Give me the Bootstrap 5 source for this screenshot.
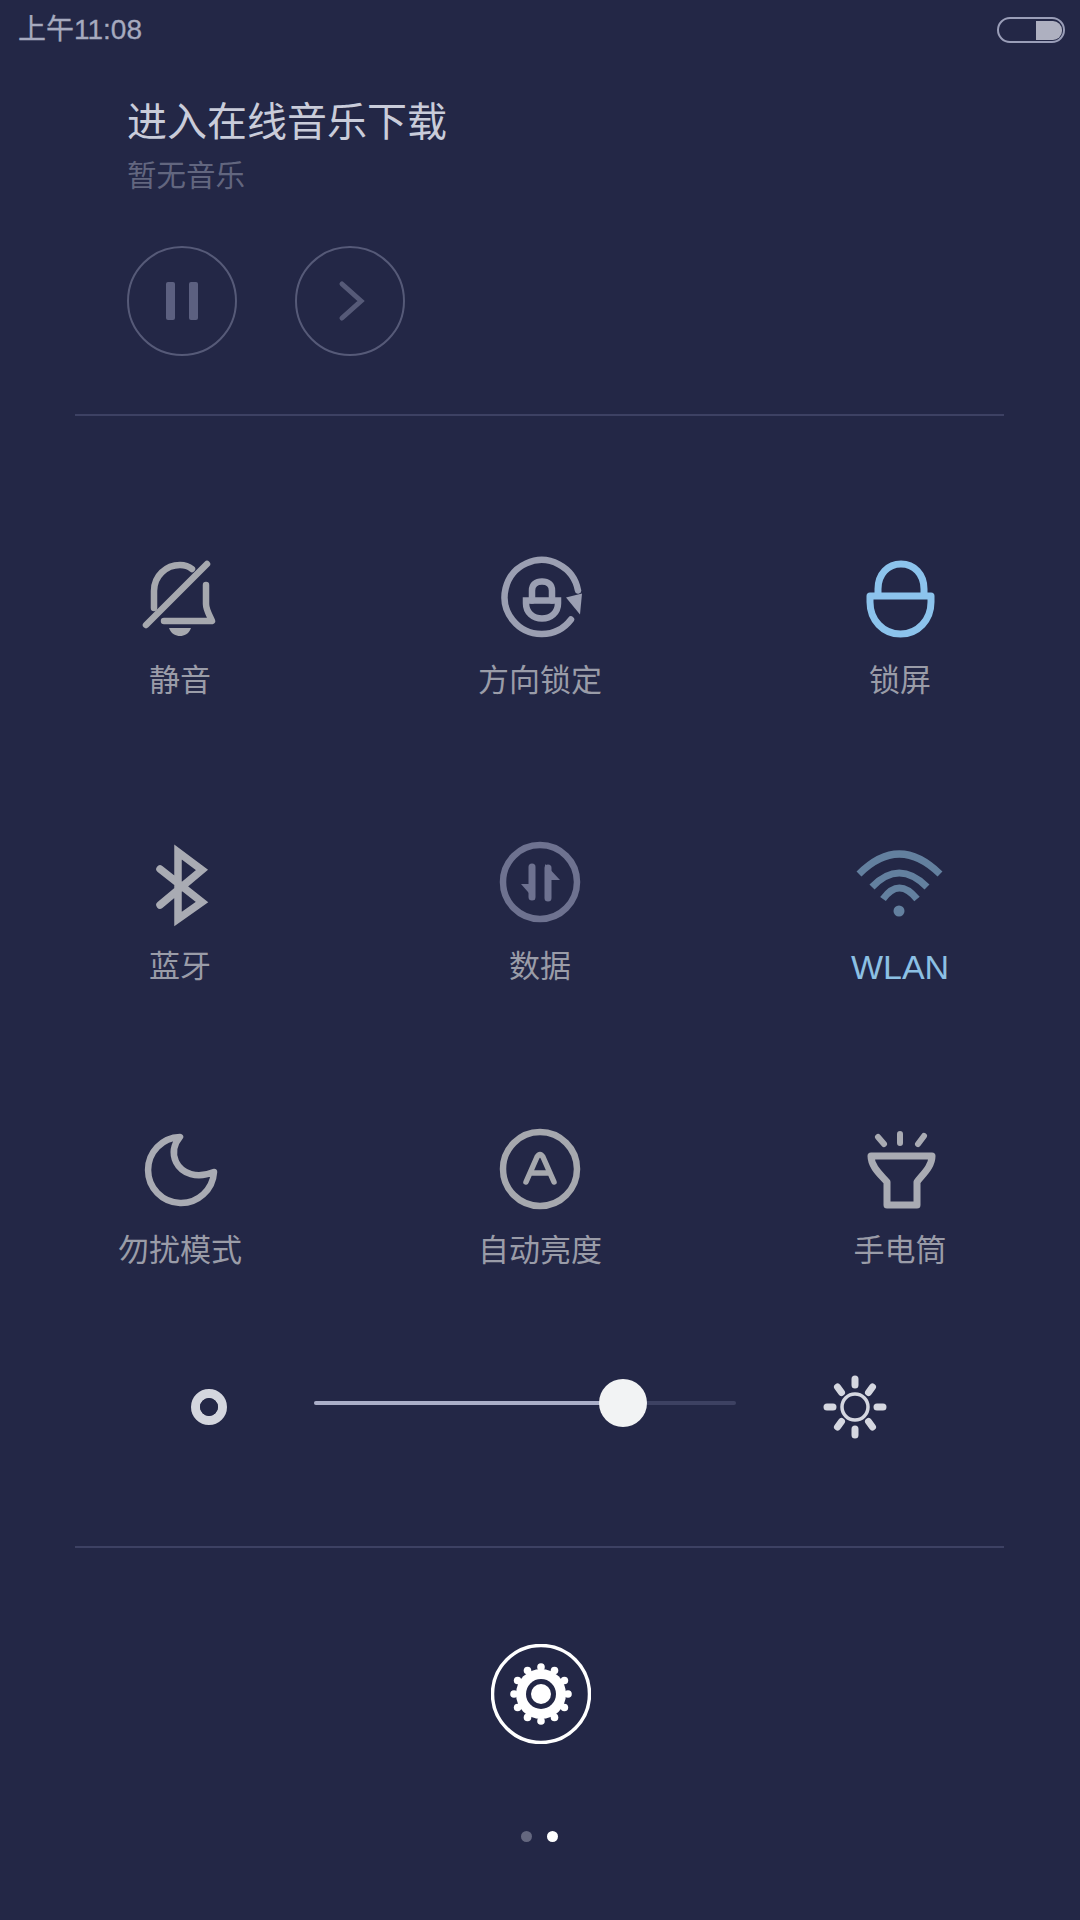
<!DOCTYPE html>
<html lang="zh-CN">
<head>
<meta charset="utf-8">
<title>控制中心</title>
<link href="https://cdn.jsdelivr.net/npm/bootstrap@5.3.0/dist/css/bootstrap.min.css" rel="stylesheet">
<style>
html,body{height:100%}
body{background:#232746;font-family:"Liberation Sans","Noto Sans CJK SC",sans-serif;overflow:hidden}
.panel{width:1080px;height:1920px}
.status-row{height:60px;padding:0 15px 0 18px}
.clock{font-size:28px;color:#a6aabf;line-height:1;-webkit-text-stroke:.3px #a6aabf}
.batt{width:68px;height:26px;border:2.5px solid #9a9eb8;border-radius:13px;padding:0 1px 0 0}
.batt-fill{width:26px;height:19px;background:#aeb0c0;border-radius:0 9px 9px 0}
.music{padding:38px 0 0 127px}
.music-title{font-size:40px;line-height:48px;color:#c9ccda}
.music-sub{font-size:29.5px;line-height:40px;color:#62667f;margin-top:10px}
.music-ctrls{gap:58px;margin-top:50px}
.round-btn{width:110px;height:110px;border:2px solid #565a78;border-radius:50%}
.rule-line{margin:58px 76px 0 75px;border:0;border-top:2px solid #3d4163;opacity:1}
.tiles{padding-top:142px}
.tile-icon{display:block;margin:0 auto;overflow:visible}
.tile-name{font-size:31px;line-height:36px;color:#9a9ca8;text-align:center}
.tile-on{color:#8cc0e4;font-size:34px}
.band-a{margin-top:25px}
.band-b{margin-top:144px}
.band-b .tile-name{margin-top:26px}
.band-c{margin-top:144px}
.band-c .tile-name{margin-top:24px}
.bright{margin:106px 0 0 191px;gap:87px}
.track-box{width:422px;height:4px;background:#3d4162;border-radius:2px;margin-bottom:8px}
.track-fill{height:4px;background:#aaaec8;border-radius:2px}
.track-knob{width:48px;height:48px;border-radius:50%;background:#f2f3f4;top:-22px;left:285px}
.second-line{margin-top:107px}
.gear-row{margin-top:96px}
.gear-svg{margin-left:2px}
.pager{margin-top:87px;gap:15px;padding-right:2px}
.pager-dot{width:11px;height:11px;border-radius:50%;background:#64677f}
.pager-on{background:#fff}
</style>
</head>
<body>
<div class="panel d-flex flex-column">
  <div class="status-row d-flex justify-content-between align-items-center">
    <span class="clock">上午11:08</span>
    <div class="batt d-flex justify-content-end align-items-center"><div class="batt-fill"></div></div>
  </div>

  <div class="music">
    <div class="music-title">进入在线音乐下载</div>
    <div class="music-sub">暂无音乐</div>
    <div class="music-ctrls d-flex">
      <div class="round-btn d-flex align-items-center justify-content-center">
        <svg width="36" height="38" viewBox="0 0 36 38"><rect x="2" y="0" width="9" height="38" rx="2" fill="#5c6080"/><rect x="25" y="0" width="9" height="38" rx="2" fill="#5c6080"/></svg>
      </div>
      <div class="round-btn d-flex align-items-center justify-content-center">
        <svg width="30" height="42" viewBox="0 0 30 42"><path d="M7 4 L26 21 L7 38" fill="none" stroke="#565a78" stroke-width="5" stroke-linecap="round" stroke-linejoin="miter"/></svg>
      </div>
    </div>
  </div>

  <hr class="rule-line">

  <div class="tiles">
    <div class="row g-0">
      <div class="col-4">
        <svg class="tile-icon" width="80" height="80" viewBox="0 0 80 80" fill="none" stroke="#a6a8ae" stroke-width="6.5" stroke-linecap="round" stroke-linejoin="round">
          <path d="M14 50 V33 C14 18 26 7 40 7 C45 7 49 8.5 52 11"/>
          <path d="M66 27 V46 C66 52 70 58 72 63 H24"/>
          <path d="M6 67 L67 6"/>
          <path d="M29 70 H51 C49 76 44 78 40 78 C36 78 31 76 29 70Z" fill="#a6a8ae" stroke="none"/>
        </svg>
        <div class="tile-name band-a">静音</div>
      </div>
      <div class="col-4">
        <svg class="tile-icon" width="80" height="80" viewBox="0 0 80 80" fill="none" stroke="#9b9fb2" stroke-width="6.5" stroke-linecap="round">
          <g transform="translate(2 1.5)">
            <path d="M69 60 A37 37 0 1 1 76 31"/>
            <path d="M64 38 L80 34 L78 55Z" fill="#9b9fb2" stroke="none"/>
            <path d="M30 41 V31 C30 25 34 22 40 22 C46 22 50 25 50 31 V41"/>
            <path d="M24 41 H56 V44 C56 53 49 59 40 59 C31 59 24 53 24 44Z"/>
          </g>
        </svg>
        <div class="tile-name band-a">方向锁定</div>
      </div>
      <div class="col-4">
        <svg class="tile-icon" width="80" height="80" viewBox="0 0 80 80" fill="none" stroke="#8cc3ec" stroke-width="7">
          <g transform="translate(0 -1)">
            <path d="M18 38 V32 C18 17 28 7 41 7 C54 7 64 17 64 32 V38"/>
            <path d="M10 39 H71 V45 C71 63 58 77 40.5 77 C23 77 10 63 10 45Z" stroke-linejoin="round"/>
          </g>
        </svg>
        <div class="tile-name band-a">锁屏</div>
      </div>
    </div>

    <div class="row g-0 band-b">
      <div class="col-4">
        <svg class="tile-icon" width="80" height="80" viewBox="0 0 80 80" fill="none" stroke="#a9abb3" stroke-width="7.5" stroke-linejoin="miter" stroke-linecap="round">
          <path d="M20 26 L62 59 L38 76 V9 L62 27 L20 62"/>
        </svg>
        <div class="tile-name">蓝牙</div>
      </div>
      <div class="col-4">
        <svg class="tile-icon" width="80" height="80" viewBox="0 0 80 80" fill="none" stroke="#6e7290" stroke-width="6.5">
          <circle cx="40" cy="39" r="37"/>
          <path d="M32 24 V54" stroke-width="7" stroke-linecap="round"/>
          <path d="M21 41 H35 V57Z" fill="#6e7290" stroke="none"/>
          <path d="M48 25 V55" stroke-width="7" stroke-linecap="round"/>
          <path d="M45 21 L60 37 H45Z" fill="#6e7290" stroke="none"/>
        </svg>
        <div class="tile-name">数据</div>
      </div>
      <div class="col-4">
        <svg class="tile-icon" width="80" height="80" viewBox="0 0 80 80" fill="none" stroke="#63809f" stroke-width="7">
          <path d="M-1 31 Q39 -9 80 31"/>
          <path d="M12 44 Q39 16 67 44"/>
          <path d="M23 56 Q39 34 57 56"/>
          <circle cx="39" cy="68" r="5.5" fill="#63809f" stroke="none"/>
        </svg>
        <div class="tile-name tile-on">WLAN</div>
      </div>
    </div>

    <div class="row g-0 band-c">
      <div class="col-4">
        <svg class="tile-icon" width="80" height="80" viewBox="0 0 80 80" fill="none" stroke="#a9abb3" stroke-width="6.5" stroke-linejoin="round">
          <g transform="translate(2 0)">
            <path d="M38 8 A33 33 0 1 0 72 43 C55 50 40 45 34 33 C30 24 32 15 38 8Z"/>
          </g>
        </svg>
        <div class="tile-name">勿扰模式</div>
      </div>
      <div class="col-4">
        <svg class="tile-icon" width="80" height="80" viewBox="0 0 80 80" fill="none" stroke="#a6a8ae" stroke-width="6.5" stroke-linecap="round" stroke-linejoin="round">
          <circle cx="40" cy="40" r="37"/>
          <path d="M26 53 L37 28 Q40 23 43 28 L54 53 M31 44 H49" stroke-width="5.5"/>
        </svg>
        <div class="tile-name">自动亮度</div>
      </div>
      <div class="col-4">
        <svg class="tile-icon" width="80" height="80" viewBox="0 0 80 80" fill="none" stroke="#a9abb3" stroke-width="7" stroke-linejoin="round" stroke-linecap="round">
          <path d="M18 8 L24 15 M40 5 V14 M64 7 L58 15" stroke-width="6"/>
          <path d="M11 27 H72 C72 38 62 46 57 53 V76 H27 V53 C21 46 11 38 11 27Z"/>
        </svg>
        <div class="tile-name">手电筒</div>
      </div>
    </div>
  </div>

  <div class="bright d-flex align-items-center">
    <svg width="36" height="36" viewBox="0 0 36 36" fill="none"><circle cx="18" cy="18" r="13.5" stroke="#d4d6de" stroke-width="9"/><circle cx="18" cy="18" r="9" fill="#232746"/></svg>
    <div class="track-box position-relative">
      <div class="track-fill" style="width:73%"></div>
      <div class="track-knob position-absolute"></div>
    </div>
    <svg width="64" height="64" viewBox="0 0 64 64" fill="none" stroke="#d5d7e0" stroke-linecap="round">
      <circle cx="32" cy="32" r="13" stroke-width="3.5"/>
      <g stroke-width="7">
        <path d="M32 4 V10 M32 54 V60 M4 32 H10 M54 32 H60"/>
        <path d="M14.5 12 L18.5 17.5 M49.5 12 L45.5 17.5 M14.5 52 L18.5 46.5 M49.5 52 L45.5 46.5"/>
      </g>
    </svg>
  </div>

  <hr class="rule-line second-line">

  <div class="gear-row d-flex justify-content-center">
    <svg class="gear-svg" width="100" height="100" viewBox="0 0 100 100" fill="none">
      <circle cx="50" cy="50" r="48.5" stroke="#fff" stroke-width="3.5"/>
      <circle cx="50" cy="50" r="25" fill="#fff"/>
      <g fill="#fff">
        <circle cx="50" cy="23" r="3.8"/><circle cx="63.5" cy="26.6" r="3.8"/><circle cx="73.4" cy="36.5" r="3.8"/>
        <circle cx="77" cy="50" r="3.8"/><circle cx="73.4" cy="63.5" r="3.8"/><circle cx="63.5" cy="73.4" r="3.8"/>
        <circle cx="50" cy="77" r="3.8"/><circle cx="36.5" cy="73.4" r="3.8"/><circle cx="26.6" cy="63.5" r="3.8"/>
        <circle cx="23" cy="50" r="3.8"/><circle cx="26.6" cy="36.5" r="3.8"/><circle cx="36.5" cy="26.6" r="3.8"/>
      </g>
      <circle cx="50" cy="50" r="15" fill="#232746"/>
      <circle cx="50" cy="50" r="10" fill="#fff"/>
    </svg>
  </div>

  <div class="pager d-flex justify-content-center">
    <div class="pager-dot"></div>
    <div class="pager-dot pager-on"></div>
  </div>
</div>
<script src="https://cdn.jsdelivr.net/npm/bootstrap@5.3.0/dist/js/bootstrap.bundle.min.js"></script>
</body>
</html>
